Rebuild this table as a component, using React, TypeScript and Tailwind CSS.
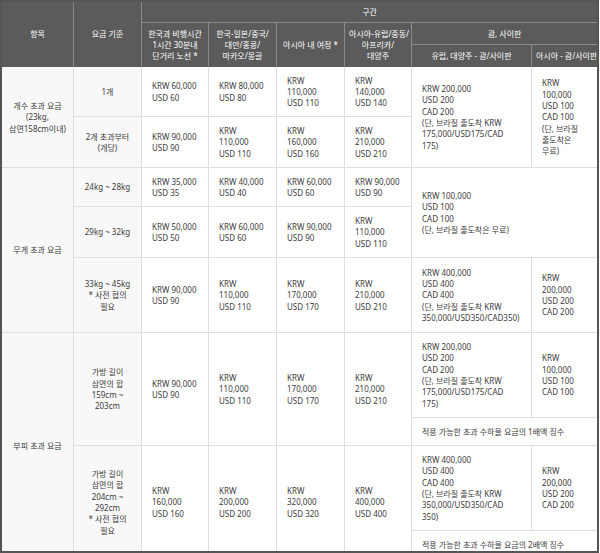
import React from 'react';

const th = 'bg-[#5b5b5b] text-white font-normal text-center align-middle whitespace-pre border-r border-b border-[#8a8a8a] px-1';
const thLast = 'bg-[#5b5b5b] text-white font-normal text-center align-middle whitespace-pre border-b border-[#8a8a8a] px-1';
const thBottom = 'border-b-[#5b5b5b]';

const side = 'bg-[#f8f8f8] text-center align-middle whitespace-pre border-r border-b border-[#dedede] px-1';
const cell = 'bg-white text-left align-middle whitespace-pre border-r border-b border-[#dedede] px-[10px]';
const cellLast = 'bg-white text-left align-middle whitespace-pre border-b border-[#dedede] px-[10px]';

const KRW_EU_1 = 'KRW 200,000\nUSD 200\nCAD 200\n(단, 브라질 출도착 KRW\n175,000/USD175/CAD\n175)';

export default function App() {
  return (
    <div
      className="w-[599px] h-[553px] overflow-hidden border-2 border-[#555555] bg-white text-[#3c3c3c] text-[8px] leading-[11.3px]"
      style={{ fontFamily: '"Noto Sans", "Noto Sans CJK KR", sans-serif' }}
    >
      <table className="w-full table-fixed border-separate border-spacing-0">
        <colgroup>
          <col className="w-[72px]" />
          <col className="w-[68px]" />
          <col className="w-[67px]" />
          <col className="w-[68px]" />
          <col className="w-[68px]" />
          <col className="w-[67px]" />
          <col className="w-[120px]" />
          <col className="w-[65px]" />
        </colgroup>
        <thead>
          <tr className="h-[21px]">
            <th rowSpan={3} className={`${th} ${thBottom}`}>항목</th>
            <th rowSpan={3} className={`${th} ${thBottom}`}>요금 기준</th>
            <th colSpan={6} className={thLast}>구간</th>
          </tr>
          <tr className="h-[22px]">
            <th rowSpan={2} className={`${th} ${thBottom}`}>{'한국과 비행시간\n1시간 30분내\n단거리 노선 *'}</th>
            <th rowSpan={2} className={`${th} ${thBottom}`}>{'한국-일본/중국/\n대만/홍콩/\n마카오/몽골'}</th>
            <th rowSpan={2} className={`${th} ${thBottom}`}>아시아 내 여정 *</th>
            <th rowSpan={2} className={`${th} ${thBottom}`}>{'아시아-유럽/중동/\n아프리카/\n대양주'}</th>
            <th colSpan={2} className={thLast}>괌, 사이판</th>
          </tr>
          <tr className="h-[22px]">
            <th className={`${th} ${thBottom}`}>유럽, 대양주 - 괌/사이판</th>
            <th className={`${thLast} ${thBottom}`}>아시아 - 괌/사이판</th>
          </tr>
        </thead>
        <tbody>
          {/* 개수 초과 요금 */}
          <tr className="h-[50px]">
            <td rowSpan={2} className={side}>{'개수 초과 요금\n(23kg,\n삼면158cm이내)'}</td>
            <td className={side}>1개</td>
            <td className={cell}>{'KRW 60,000\nUSD 60'}</td>
            <td className={cell}>{'KRW 80,000\nUSD 80'}</td>
            <td className={cell}>{'KRW\n110,000\nUSD 110'}</td>
            <td className={cell}>{'KRW\n140,000\nUSD 140'}</td>
            <td rowSpan={2} className={cell}>{KRW_EU_1}</td>
            <td rowSpan={2} className={cellLast}>{'KRW\n100,000\nUSD 100\nCAD 100\n(단, 브라질\n출도착은\n무료)'}</td>
          </tr>
          <tr className="h-[51px]">
            <td className={side}>{'2개 초과부터\n(개당)'}</td>
            <td className={cell}>{'KRW 90,000\nUSD 90'}</td>
            <td className={cell}>{'KRW\n110,000\nUSD 110'}</td>
            <td className={cell}>{'KRW\n160,000\nUSD 160'}</td>
            <td className={cell}>{'KRW\n210,000\nUSD 210'}</td>
          </tr>

          {/* 무게 초과 요금 */}
          <tr className="h-[39px]">
            <td rowSpan={3} className={side}>무게 초과 요금</td>
            <td className={side}>24kg ~ 28kg</td>
            <td className={cell}>{'KRW 35,000\nUSD 35'}</td>
            <td className={cell}>{'KRW 40,000\nUSD 40'}</td>
            <td className={cell}>{'KRW 60,000\nUSD 60'}</td>
            <td className={cell}>{'KRW 90,000\nUSD 90'}</td>
            <td rowSpan={2} colSpan={2} className={cellLast}>{'KRW 100,000\nUSD 100\nCAD 100\n(단, 브라질 출도착은 무료)'}</td>
          </tr>
          <tr className="h-[51px]">
            <td className={side}>29kg ~ 32kg</td>
            <td className={cell}>{'KRW 50,000\nUSD 50'}</td>
            <td className={cell}>{'KRW 60,000\nUSD 60'}</td>
            <td className={cell}>{'KRW 90,000\nUSD 90'}</td>
            <td className={cell}>{'KRW\n110,000\nUSD 110'}</td>
          </tr>
          <tr className="h-[75px]">
            <td className={side}>{'33kg ~ 45kg\n* 사전 협의\n필요'}</td>
            <td className={cell}>{'KRW 90,000\nUSD 90'}</td>
            <td className={cell}>{'KRW\n110,000\nUSD 110'}</td>
            <td className={cell}>{'KRW\n170,000\nUSD 170'}</td>
            <td className={cell}>{'KRW\n210,000\nUSD 210'}</td>
            <td className={cell}>{'KRW 400,000\nUSD 400\nCAD 400\n(단, 브라질 출도착 KRW\n350,000/USD350/CAD350)'}</td>
            <td className={cellLast}>{'KRW\n200,000\nUSD 200\nCAD 200'}</td>
          </tr>

          {/* 부피 초과 요금 */}
          <tr className="h-[85px]">
            <td rowSpan={4} className={side}>부피 초과 요금</td>
            <td rowSpan={2} className={side}>{'가방 길이\n삼면의 합\n159cm ~\n203cm'}</td>
            <td rowSpan={2} className={cell}>{'KRW 90,000\nUSD 90'}</td>
            <td rowSpan={2} className={cell}>{'KRW\n110,000\nUSD 110'}</td>
            <td rowSpan={2} className={cell}>{'KRW\n170,000\nUSD 170'}</td>
            <td rowSpan={2} className={cell}>{'KRW\n210,000\nUSD 210'}</td>
            <td className={cell}>{KRW_EU_1}</td>
            <td className={cellLast}>{'KRW\n100,000\nUSD 100\nCAD 100'}</td>
          </tr>
          <tr className="h-[28px]">
            <td colSpan={2} className={cellLast}>적용 가능한 초과 수하물 요금의 1배액 징수</td>
          </tr>
          <tr className="h-[85px]">
            <td rowSpan={2} className={side}>{'가방 길이\n삼면의 합\n204cm ~\n292cm\n* 사전 협의\n필요'}</td>
            <td rowSpan={2} className={cell}>{'KRW\n160,000\nUSD 160'}</td>
            <td rowSpan={2} className={cell}>{'KRW\n200,000\nUSD 200'}</td>
            <td rowSpan={2} className={cell}>{'KRW\n320,000\nUSD 320'}</td>
            <td rowSpan={2} className={cell}>{'KRW\n400,000\nUSD 400'}</td>
            <td className={cell}>{'KRW 400,000\nUSD 400\nCAD 400\n(단, 브라질 출도착 KRW\n350,000/USD350/CAD\n350)'}</td>
            <td className={cellLast}>{'KRW\n200,000\nUSD 200\nCAD 200'}</td>
          </tr>
          <tr className="h-[28px]">
            <td colSpan={2} className={cellLast}>적용 가능한 초과 수하물 요금의 2배액 징수</td>
          </tr>
        </tbody>
      </table>
    </div>
  );
}
